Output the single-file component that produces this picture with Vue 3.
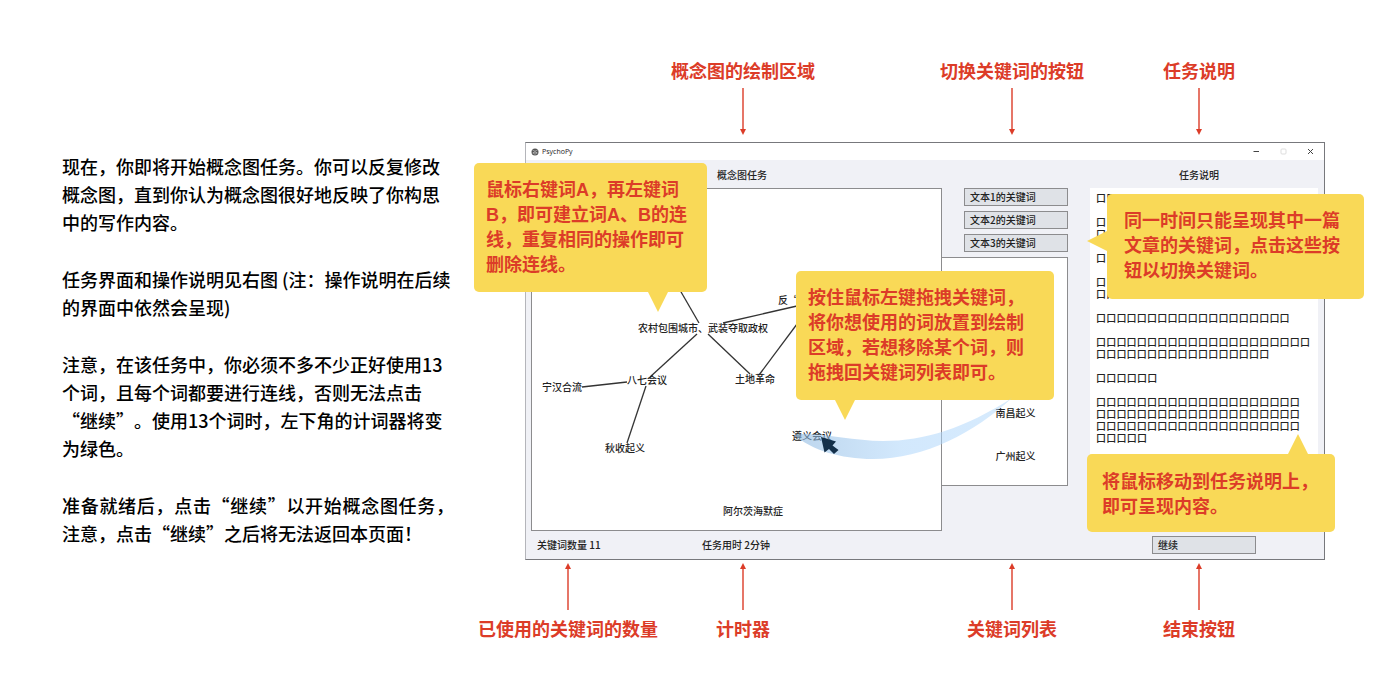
<script setup>
const topLabels = [
  { id: 'canvas', text: '概念图的绘制区域', col: 'col-2' },
  { id: 'switch', text: '切换关键词的按钮', col: 'col-3' },
  { id: 'brief', text: '任务说明', col: 'col-4' }
]
const bottomLabels = [
  { id: 'count', text: '已使用的关键词的数量', col: 'col-1' },
  { id: 'timer', text: '计时器', col: 'col-2' },
  { id: 'list', text: '关键词列表', col: 'col-3' },
  { id: 'finish', text: '结束按钮', col: 'col-4' }
]
const switches = ['文本1的关键词', '文本2的关键词', '文本3的关键词']
const keywords = ['南昌起义', '广州起义']

// Node centres on the drawing canvas
const nodes = [
  { text: '反“', x: 256, y: 111 },
  { text: '农村包围城市、武装夺取政权', x: 171, y: 139 },
  { text: '八七会议', x: 115, y: 191 },
  { text: '宁汉合流', x: 30, y: 198 },
  { text: '土地革命', x: 223, y: 190 },
  { text: '秋收起义', x: 93, y: 259 },
  { text: '遵义会议', x: 280, y: 247 },
  { text: '阿尔茨海默症', x: 221, y: 322 }
]
const links = [
  [130, 70, 167, 134],
  [191, 134, 265, 117],
  [165, 145, 118, 188],
  [176, 145, 218, 185],
  [227, 186, 274, 123],
  [50, 198, 95, 193],
  [114, 197, 95, 254]
]

// Masked brief: characters per line, grouped by paragraph
const perLine = 21
const masked = [[19], [1, 1], [1], [1, 2], [19], [21, 17], [6], [20, 20, 20, 5]]
</script>

<template>
  <main class="page" lang="zh-CN">
    <article class="guide">
      <p>现在，你即将开始概念图任务。你可以反复修改<br>概念图，直到你认为概念图很好地反映了你构思<br>中的写作内容。</p>
      <p>任务界面和操作说明见右图 (注：操作说明在后续<br>的界面中依然会呈现)</p>
      <p>注意，在该任务中，你必须不多不少正好使用13<br>个词，且每个词都要进行连线，否则无法点击<br>“继续”。使用13个词时，左下角的计词器将变<br>为绿色。</p>
      <p><span class="full-line">准备就绪后，点击“继续”以开始概念图任务，</span>注意，点击“继续”之后将无法返回本页面！</p>
    </article>

    <section class="stage">
      <div class="labels">
        <div v-for="l in topLabels" :key="l.id" class="label" :class="l.col">
          <span>{{ l.text }}</span>
          <svg class="arrow" width="8" height="47" viewBox="0 0 8 47">
            <path d="M4 0V42" stroke="#dc3c28" stroke-width="1.4" />
            <path d="M1 41H7L4 47Z" fill="#dc3c28" />
          </svg>
        </div>
      </div>

      <div class="shot">
        <div class="window">
          <header class="titlebar">
            <svg class="logo" width="8" height="8" viewBox="0 0 8 8">
              <circle cx="4" cy="4" r="3.5" fill="#555" />
              <path d="M1.2 1.8L4 3.2L6.8 1.8M1.5 5L4 3.6L6.5 5M4 4V7.2" stroke="#c8c8c8" stroke-width=".6" fill="none" />
              <circle cx="2.7" cy="5" r=".6" fill="#eee" />
              <circle cx="5.3" cy="5" r=".6" fill="#eee" />
            </svg>
            <span class="app-name">PsychoPy</span>
            <button class="ctl" aria-label="最小化"><svg width="7" height="7" viewBox="0 0 7 7"><path d="M.5 3.5H6" stroke="#444" /></svg></button>
            <button class="ctl" aria-label="最大化"><svg width="7" height="7" viewBox="0 0 7 7"><rect x="1" y="1" width="5" height="5" rx="1" fill="none" stroke="#ddd" /></svg></button>
            <button class="ctl" aria-label="关闭"><svg width="7" height="7" viewBox="0 0 7 7"><path d="M1 1L6 6M6 1L1 6" stroke="#444" /></svg></button>
          </header>

          <div class="body">
            <h2 class="head head-map">概念图任务</h2>
            <h2 class="head head-brief">任务说明</h2>
            <div class="canvas">
              <svg class="links" width="409" height="340" viewBox="0 0 409 340">
                <line v-for="(k, i) in links" :key="i" :x1="k[0]" :y1="k[1]" :x2="k[2]" :y2="k[3]" stroke="#333" stroke-width="1.3" />
              </svg>
              <span v-for="n in nodes" :key="n.text" class="node" :style="{ left: n.x + 'px', top: n.y + 'px' }">{{ n.text }}</span>
            </div>
            <div class="words">
              <div class="switches">
                <button v-for="s in switches" :key="s" class="btn">{{ s }}</button>
              </div>
              <div class="word-list">
                <span v-for="w in keywords" :key="w">{{ w }}</span>
              </div>
            </div>
            <div class="brief">
              <div v-for="(p, i) in masked" :key="i" class="masked">
                <div v-for="(n, j) in p" :key="j" class="masked-line" :style="{ width: (n / perLine) * 100 + '%' }">{{ '口'.repeat(n) }}</div>
              </div>
            </div>
          </div>

          <footer class="status">
            <span>关键词数量 11</span>
            <span>任务用时 2分钟</span>
            <button class="btn">继续</button>
          </footer>
        </div>

        <div class="tip tip-link">鼠标右键词A，再左键词<br>B，即可建立词A、B的连<br>线，重复相同的操作即可<br>删除连线。
          <svg class="tail" width="20" height="20" viewBox="0 0 20 20"><path d="M0 0H20L10 20Z" fill="#f9d957" /></svg>
        </div>
        <div class="tip tip-switch">同一时间只能呈现其中一篇<br>文章的关键词，点击这些按<br>钮以切换关键词。
          <svg class="tail" width="20" height="20" viewBox="0 0 20 20"><path d="M20 0V20L0 10Z" fill="#f9d957" /></svg>
        </div>
        <div class="tip tip-drag">按住鼠标左键拖拽关键词，<br>将你想使用的词放置到绘制<br>区域，若想移除某个词，则<br>拖拽回关键词列表即可。
          <svg class="tail" width="20" height="20" viewBox="0 0 20 20"><path d="M0 0H20L10 20Z" fill="#f9d957" /></svg>
        </div>
        <div class="tip tip-brief">将鼠标移动到任务说明上，<br>即可呈现内容。
          <svg class="tail" width="20" height="20" viewBox="0 0 20 20"><path d="M0 20H20L10 0Z" fill="#f9d957" /></svg>
        </div>

        <svg class="drag" width="225" height="65" viewBox="790 397 225 65">
          <defs>
            <linearGradient id="trail" x1="0" x2="1" y1="0" y2="0">
              <stop offset="0" stop-color="#8fb9e0" stop-opacity=".6" />
              <stop offset=".5" stop-color="#aed6fb" stop-opacity=".55" />
              <stop offset="1" stop-color="#aed6fb" stop-opacity=".5" />
            </linearGradient>
          </defs>
          <path d="M794 435C815 431 850 441 883 441C925 441 965 428 1012 398C975 432 925 459 873 459C840 459 812 450 794 435Z" fill="url(#trail)" />
          <path d="M821 437L836 441.5L832.5 445.5L838.5 450L834 454L829 449L824.5 452.5Z" fill="#14304a" />
        </svg>
      </div>

      <div class="labels">
        <div v-for="l in bottomLabels" :key="l.id" class="label" :class="l.col">
          <svg class="arrow" width="8" height="47" viewBox="0 0 8 47">
            <path d="M4 47V5" stroke="#dc3c28" stroke-width="1.4" />
            <path d="M1 6H7L4 0Z" fill="#dc3c28" />
          </svg>
          <span>{{ l.text }}</span>
        </div>
      </div>
    </section>
  </main>
</template>

<style>
body {
  margin: 0;
  background: #fff;
}
</style>

<style scoped>
* {
  box-sizing: border-box;
}
.page {
  display: flex;
  align-items: flex-start;
  gap: 63px;
  padding: 57px 75px 48px 62px;
  font-family: "Noto Sans CJK SC", sans-serif;
  text-spacing-trim: space-all;
}
.guide {
  flex: 0 0 400px;
  padding-top: 95px;
  color: #000;
  font-size: 18px;
  font-weight: 500;
  line-height: 28px;
}
.guide p {
  margin: 0 0 29px;
  white-space: nowrap;
}
.full-line {
  display: block;
  width: 392px;
  text-align-last: justify;
}
.stage {
  flex: 1;
  min-width: 800px;
}
.labels {
  display: grid;
  grid-template-columns: 86fr 264fr 274fr 100fr 76fr;
}
.label {
  display: flex;
  flex-direction: column;
  align-items: center;
  gap: 5px;
  min-width: 0;
  color: #dc3c28;
  font-size: 18px;
  font-weight: 700;
  line-height: 26px;
  white-space: nowrap;
}
.col-1 { grid-column: 1; }
.col-2 { grid-column: 2; }
.col-3 { grid-column: 3; }
.col-4 { grid-column: 4; }
.arrow {
  display: block;
  flex: none;
}
.shot {
  position: relative;
  margin: 7px 0 3px;
}
.window {
  background: #f0f1f6;
  border: 1px solid #77787c;
  border-left-color: #b4b5ba;
  color: #222;
  font-size: 10px;
  font-weight: 500;
  line-height: 12px;
}
.titlebar {
  display: flex;
  align-items: center;
  height: 17px;
  padding: 0 10px 0 5px;
  background: #fff;
}
.app-name {
  flex: 1;
  margin-left: 3px;
  font-family: "Open Sans", sans-serif;
  font-size: 7px;
}
.ctl {
  display: flex;
  margin-left: 20px;
  padding: 0;
  border: 0;
  background: none;
}
.ctl:first-of-type {
  margin-left: 0;
}
.body {
  display: grid;
  grid-template-columns: 411fr 126fr 22fr 228fr;
  grid-template-rows: 28px auto;
  padding: 0 6px 0 5px;
}
.head {
  margin: 0;
  font-size: 10px;
  font-weight: 500;
  line-height: 29px;
  text-align: center;
}
.head-map {
  grid-column: 1;
  padding-left: 11px;
}
.head-brief {
  grid-column: 4;
  padding-right: 10px;
}
.canvas {
  grid-column: 1;
  position: relative;
  height: 343px;
  background: #fff;
  border: 1px solid #8c8c8e;
}
.links {
  display: block;
}
.node {
  position: absolute;
  transform: translate(-50%, -50%);
  white-space: nowrap;
}
.words {
  grid-column: 2;
  display: flex;
  flex-direction: column;
  gap: 5px;
}
.switches {
  display: flex;
  flex-direction: column;
  gap: 5px;
  padding-left: 22px;
}
.btn {
  height: 18px;
  padding: 0 5px;
  background: #dfe2e7;
  border: 1px solid #8c8c8e;
  border-radius: 0;
  color: #222;
  font-family: inherit;
  font-size: 10px;
  font-weight: 500;
  line-height: 16px;
  text-align: left;
}
.word-list {
  display: flex;
  flex-direction: column;
  align-items: center;
  justify-content: flex-end;
  gap: 31px;
  height: 229px;
  padding: 0 0 23px 22px;
  background: #fff;
  border: 1px solid #8c8c8e;
  border-left: 0;
}
.brief {
  grid-column: 4;
  display: flex;
  flex-direction: column;
  gap: 12px;
  padding: 4px 8px 4px 6px;
  background: #fff;
}
.masked-line {
  text-align-last: justify;
  white-space: nowrap;
}
.status {
  display: grid;
  grid-template-columns: 165fr 450fr 104fr 68fr;
  align-items: center;
  height: 28px;
  padding-left: 11px;
}
.tip {
  position: absolute;
  background: #f9d957;
  border-radius: 5px;
  color: #dc3c28;
  font-family: "Liberation Sans", "Noto Sans CJK SC", sans-serif;
  font-size: 18px;
  font-weight: 700;
  line-height: 25px;
  white-space: nowrap;
}
.tail {
  position: absolute;
}
.tip-link {
  left: -51px;
  top: 21px;
  width: 233px;
  padding: 15px 12px 14px;
}
.tip-link .tail {
  left: 174px;
  top: 100%;
}
.tip-switch {
  left: 582px;
  top: 52px;
  width: 257px;
  padding: 15px 17px;
}
.tip-switch .tail {
  right: 100%;
  top: 37px;
}
.tip-drag {
  left: 271px;
  top: 129px;
  width: 258px;
  padding: 15px 12px 14px;
}
.tip-drag .tail {
  left: 39px;
  top: 100%;
}
.tip-brief {
  left: 562px;
  top: 312px;
  width: 248px;
  padding: 16px 15px 12px;
}
.tip-brief .tail {
  left: 201px;
  bottom: 100%;
}
.drag {
  position: absolute;
  left: 265px;
  top: 255px;
}
</style>
